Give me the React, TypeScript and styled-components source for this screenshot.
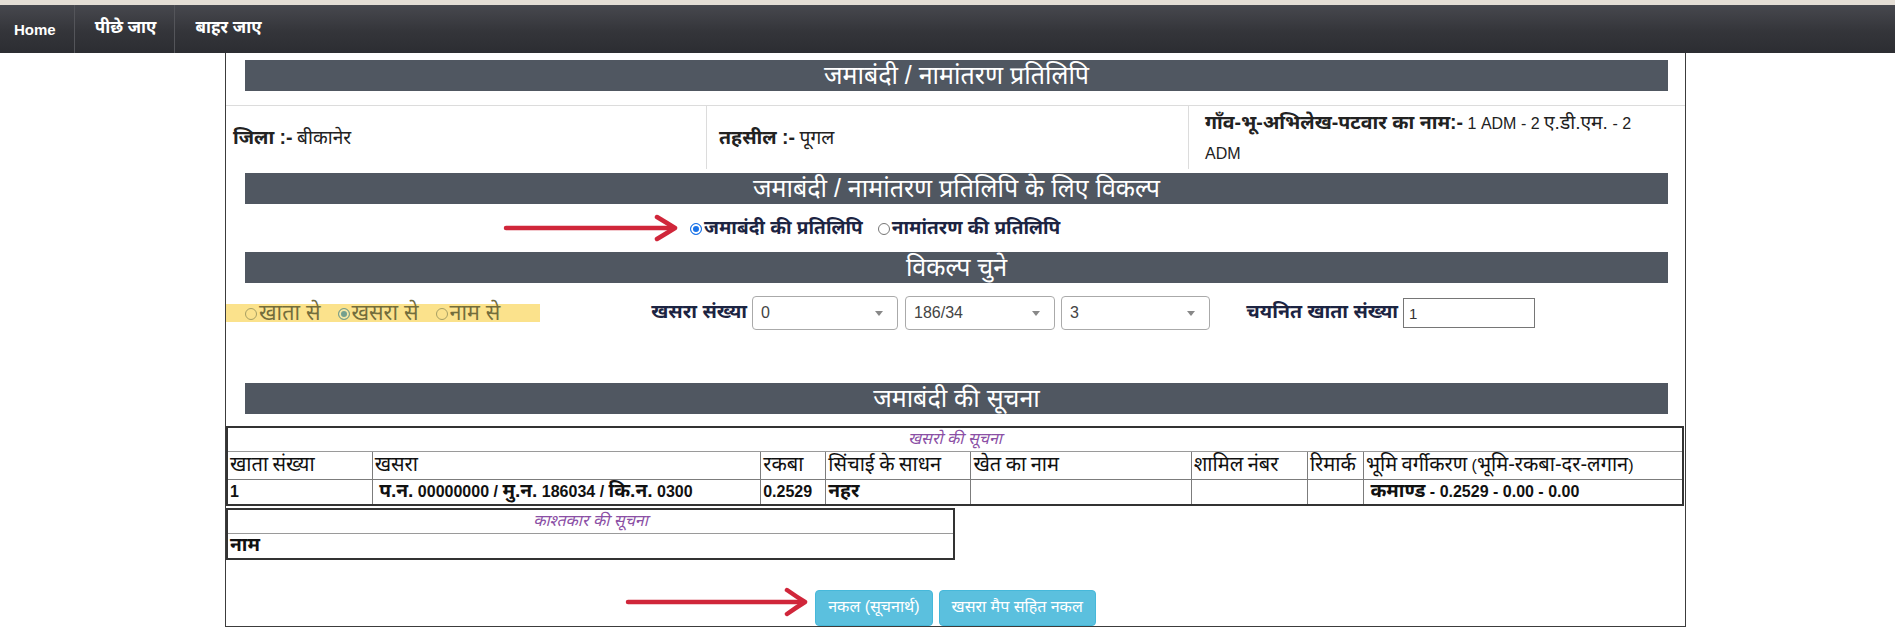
import React from 'react';
import styled, { createGlobalStyle } from 'styled-components';

const GlobalStyle = createGlobalStyle`
  html, body { margin: 0; padding: 0; background: #ffffff; }
  body {
    font-family: "Liberation Sans", "Noto Sans Devanagari", "Lohit Devanagari", "Noto Sans", Arial, sans-serif;
    color: #222;
  }
  * { box-sizing: border-box; }
`;

const DEVA = `"Liberation Sans", "Noto Sans Devanagari", "Lohit Devanagari", "Noto Sans", sans-serif`;

/* Devanagari runs rendered a little larger than the Latin text around them */
const Dv = styled.span<{ $s: number }>`
  font-size: ${(p) => p.$s}em;
`;

const DEV_RE = /([\u0900-\u097F](?:[\u0900-\u097F\-.]*[\u0900-\u097F.])?)/;

const Mixed: React.FC<{ text: string; s?: number }> = ({ text, s = 1.22 }) => (
  <>
    {text.split(DEV_RE).map((part, i) =>
      /[\u0900-\u097F]/.test(part) ? (
        <Dv key={i} $s={s}>
          {part}
        </Dv>
      ) : (
        <React.Fragment key={i}>{part}</React.Fragment>
      )
    )}
  </>
);

const TopStrip = styled.div`
  height: 5px;
  background: #e4ded5;
`;

const NavBar = styled.nav`
  height: 48px;
  display: flex;
  align-items: stretch;
  background: linear-gradient(to bottom, #47484e 0%, #34353a 55%, #2c2d32 100%);
`;

const NavItem = styled.a<{ $first?: boolean }>`
  display: flex;
  align-items: center;
  padding: 0 18px 0 ${(p) => (p.$first ? 14 : 20)}px;
  color: #ffffff;
  font-weight: bold;
  font-size: ${(p) => (p.$first ? 15 : 17)}px;
  text-decoration: none;
  border-right: 1px solid #54555a;
  &:last-child { border-right: none; }
`;

const Page = styled.main`
  margin-left: 225px;
  width: 1461px;
  height: 574px;
  border: 1px solid #3c3c3c;
  border-top: none;
  padding-top: 7px;
  display: flex;
  flex-direction: column;
`;

const SectionBar = styled.div<{ $mt?: number }>`
  margin: ${(p) => p.$mt ?? 0}px 17px 0 19px;
  height: 31px;
  line-height: 31px;
  background: #505761;
  color: #ffffff;
  text-align: center;
  font-size: 25px;
  font-family: ${DEVA};
  white-space: nowrap;
  overflow: hidden;
`;

const InfoRow = styled.div`
  margin-top: 14px;
  display: grid;
  grid-template-columns: 480px 482px 1fr;
  border-top: 1px solid #dcdcdc;
`;

const InfoCell = styled.div<{ $pad: number }>`
  display: flex;
  align-items: center;
  padding: 1px 26px 1px ${(p) => p.$pad}px;
  height: 63px;
  font-size: 16px;
  line-height: 30px;
  color: #222;
  & + & { border-left: 1px solid #dcdcdc; }
`;

const InfoLabel = styled.b`
  font-weight: bold;
  font-size: 19.5px;
`;

const RadioRow = styled.div`
  position: relative;
  height: 48px;
  display: flex;
  align-items: center;
  gap: 15px;
  padding-left: 464px;
`;

const RadioItem = styled.label<{ $tone?: 'navy' | 'olive' }>`
  display: inline-flex;
  align-items: center;
  font-size: ${(p) => (p.$tone === 'olive' ? 21.5 : 19)}px;
  font-weight: ${(p) => (p.$tone === 'olive' ? 'normal' : 'bold')};
  color: ${(p) => (p.$tone === 'olive' ? '#736d3c' : '#1c2442')};
  white-space: nowrap;
  line-height: 20px;
`;

const RadioMark = styled.span<{ $checked?: boolean; $tone?: 'navy' | 'olive' }>`
  display: inline-block;
  width: 12px;
  height: 12px;
  border-radius: 50%;
  margin-right: 2px;
  margin-top: 2px;
  flex: none;
  border: 1px solid
    ${(p) =>
      p.$checked
        ? p.$tone === 'olive' ? '#7d9f86' : '#1a73e8'
        : p.$tone === 'olive' ? '#a79f63' : '#767676'};
  background: ${(p) =>
    p.$checked ? (p.$tone === 'olive' ? '#74a08e' : '#1a73e8') : 'transparent'};
  box-shadow: ${(p) =>
    p.$checked ? `inset 0 0 0 2px ${p.$tone === 'olive' ? '#f3e7a6' : '#ffffff'}` : 'none'};
`;

const ArrowBox = styled.div<{ $left: number; $top: number }>`
  position: absolute;
  left: ${(p) => p.$left}px;
  top: ${(p) => p.$top}px;
  line-height: 0;
  pointer-events: none;
`;

const ControlsRow = styled.div`
  margin-top: 12px;
  height: 36px;
  display: flex;
  align-items: center;
`;

const Highlight = styled.div`
  width: 314px;
  height: 18px;
  background: #fbe28c;
  padding-left: 19px;
  display: flex;
  align-items: center;
  gap: 17px;
`;

const FieldLabel = styled.div<{ $w: number }>`
  width: ${(p) => p.$w}px;
  text-align: right;
  font-weight: bold;
  font-size: 19.5px;
  color: #1c2442;
  white-space: nowrap;
  margin-right: 5px;
`;

const SelectBox = styled.div<{ $w: number; $mr?: number }>`
  position: relative;
  width: ${(p) => p.$w}px;
  height: 34px;
  margin-right: ${(p) => p.$mr ?? 0}px;
  border: 1px solid #aaaaaa;
  border-radius: 4px;
  background: #ffffff;
  display: flex;
  align-items: center;
  padding: 0 8px;
  font-size: 16px;
  color: #444;
`;

const Caret = styled.span`
  position: absolute;
  right: 14px;
  top: 14px;
  width: 0;
  height: 0;
  border-left: 4px solid transparent;
  border-right: 4px solid transparent;
  border-top: 5px solid #888888;
`;

const TextInput = styled.div`
  width: 132px;
  height: 30px;
  border: 1px solid #767676;
  background: #ffffff;
  display: flex;
  align-items: center;
  padding: 0 5px;
  font-size: 15px;
  color: #333;
`;

const DataTable = styled.table<{ $w: number; $mt: number }>`
  width: ${(p) => p.$w}px;
  margin-top: ${(p) => p.$mt}px;
  border-collapse: collapse;
  table-layout: fixed;
  border: 2px solid #333333;
  font-size: 16px;
  color: #111111;
  font-family: ${DEVA};
`;

const Col = styled.col<{ $w: number }>`
  width: ${(p) => p.$w}px;
`;

const CaptionCell = styled.td`
  height: 24px;
  padding: 0;
  line-height: 22px;
  text-align: center;
  font-style: italic;
  font-size: 16px;
  color: #8b4fa5;
  border-bottom: 1px solid #9a9a9a;
`;

const Cell = styled.td<{ $bold?: boolean; $h: number }>`
  height: ${(p) => p.$h}px;
  padding: 0 2px;
  line-height: 22px;
  border: 1px solid #7c7c7c;
  font-weight: ${(p) => (p.$bold ? 'bold' : 'normal')};
  white-space: nowrap;
  overflow: hidden;
  vertical-align: middle;
`;

const ButtonRow = styled.div`
  position: relative;
  margin-top: 30px;
  display: flex;
  justify-content: center;
  gap: 6px;
`;

const InfoButton = styled.button`
  height: 36px;
  padding: 0 12px;
  background: #5bc0de;
  border: 1px solid #46b8da;
  border-radius: 4px;
  color: #ffffff;
  font-size: 16px;
  font-family: ${DEVA};
  cursor: pointer;
`;

const RedArrow: React.FC<{ w: number; h: number }> = ({ w, h }) => {
  const m = h / 2;
  return (
    <svg width={w} height={h} viewBox={`0 0 ${w} ${h}`}>
      <path
        d={`M3 ${m} H${w - 5}`}
        stroke="#d0263a"
        strokeWidth={4.5}
        strokeLinecap="round"
        fill="none"
      />
      <path
        d={`M${w - 22} 3 Q${w - 12} ${m - 5} ${w - 4} ${m} Q${w - 12} ${m + 5} ${w - 22} ${h - 3}`}
        stroke="#d0263a"
        strokeWidth={4.5}
        strokeLinecap="round"
        strokeLinejoin="round"
        fill="none"
      />
    </svg>
  );
};

const khasraCols = [145, 388, 65, 145, 220, 116, 56, 319];
const khasraHeads = [
  'खाता संख्या',
  'खसरा',
  'रकबा',
  'सिंचाई के साधन',
  'खेत का नाम',
  'शामिल नंबर',
  'रिमार्क',
  'भूमि वर्गीकरण (भूमि-रकबा-दर-लगान)',
];
const khasraData = [
  '1',
  '\u00a0प.न. 00000000 / मु.न. 186034 / कि.न. 0300',
  '0.2529',
  'नहर',
  '',
  '',
  '',
  '\u00a0कमाण्ड - 0.2529 - 0.00 - 0.00',
];

export default function App() {
  return (
    <>
      <GlobalStyle />
      <TopStrip />
      <NavBar>
        <NavItem $first href="#">Home</NavItem>
        <NavItem href="#">पीछे जाए</NavItem>
        <NavItem href="#">बाहर जाए</NavItem>
      </NavBar>

      <Page>
        <SectionBar>जमाबंदी / नामांतरण प्रतिलिपि</SectionBar>

        <InfoRow>
          <InfoCell $pad={7}>
            <span>
              <InfoLabel>जिला :-</InfoLabel> <Mixed text="बीकानेर" s={1.2} />
            </span>
          </InfoCell>
          <InfoCell $pad={12}>
            <span>
              <InfoLabel>तहसील :-</InfoLabel> <Mixed text="पूगल" s={1.2} />
            </span>
          </InfoCell>
          <InfoCell $pad={16}>
            <span>
              <InfoLabel>गाँव-भू-अभिलेख-पटवार का नाम:-</InfoLabel>{' '}
              <Mixed text="1 ADM - 2 ए.डी.एम. - 2 ADM" s={1.2} />
            </span>
          </InfoCell>
        </InfoRow>

        <SectionBar $mt={4}>जमाबंदी / नामांतरण प्रतिलिपि के लिए विकल्प</SectionBar>

        <RadioRow>
          <ArrowBox $left={277} $top={10}>
            <RedArrow w={176} h={28} />
          </ArrowBox>
          <RadioItem>
            <RadioMark $checked />जमाबंदी की प्रतिलिपि
          </RadioItem>
          <RadioItem>
            <RadioMark />नामांतरण की प्रतिलिपि
          </RadioItem>
        </RadioRow>

        <SectionBar>विकल्प चुने</SectionBar>

        <ControlsRow>
          <Highlight>
            <RadioItem $tone="olive">
              <RadioMark $tone="olive" />खाता से
            </RadioItem>
            <RadioItem $tone="olive">
              <RadioMark $tone="olive" $checked />खसरा से
            </RadioItem>
            <RadioItem $tone="olive">
              <RadioMark $tone="olive" />नाम से
            </RadioItem>
          </Highlight>
          <FieldLabel $w={207}>खसरा संख्या</FieldLabel>
          <SelectBox $w={146} $mr={7}>0<Caret /></SelectBox>
          <SelectBox $w={150} $mr={6}>186/34<Caret /></SelectBox>
          <SelectBox $w={149}>3<Caret /></SelectBox>
          <FieldLabel $w={188}>चयनित खाता संख्या</FieldLabel>
          <TextInput>1</TextInput>
        </ControlsRow>

        <SectionBar $mt={52}>जमाबंदी की सूचना</SectionBar>

        <DataTable $w={1458} $mt={12}>
          <colgroup>
            {khasraCols.map((w, i) => (
              <Col key={i} $w={w} />
            ))}
          </colgroup>
          <tbody>
            <tr>
              <CaptionCell colSpan={8}>खसरो की सूचना</CaptionCell>
            </tr>
            <tr>
              {khasraHeads.map((h, i) => (
                <Cell key={i} $h={28}>
                  <Mixed text={h} s={1.25} />
                </Cell>
              ))}
            </tr>
            <tr>
              {khasraData.map((d, i) => (
                <Cell key={i} $h={26} $bold>
                  <Mixed text={d} s={1.2} />
                </Cell>
              ))}
            </tr>
          </tbody>
        </DataTable>

        <DataTable $w={729} $mt={2}>
          <tbody>
            <tr>
              <CaptionCell>काश्तकार की सूचना</CaptionCell>
            </tr>
            <tr>
              <Cell $h={26} $bold>
                <Mixed text="नाम" s={1.2} />
              </Cell>
            </tr>
          </tbody>
        </DataTable>

        <ButtonRow>
          <ArrowBox $left={399} $top={-3}>
            <RedArrow w={184} h={30} />
          </ArrowBox>
          <InfoButton>नकल (सूचनार्थ)</InfoButton>
          <InfoButton>खसरा मैप सहित नकल</InfoButton>
        </ButtonRow>
      </Page>
    </>
  );
}
